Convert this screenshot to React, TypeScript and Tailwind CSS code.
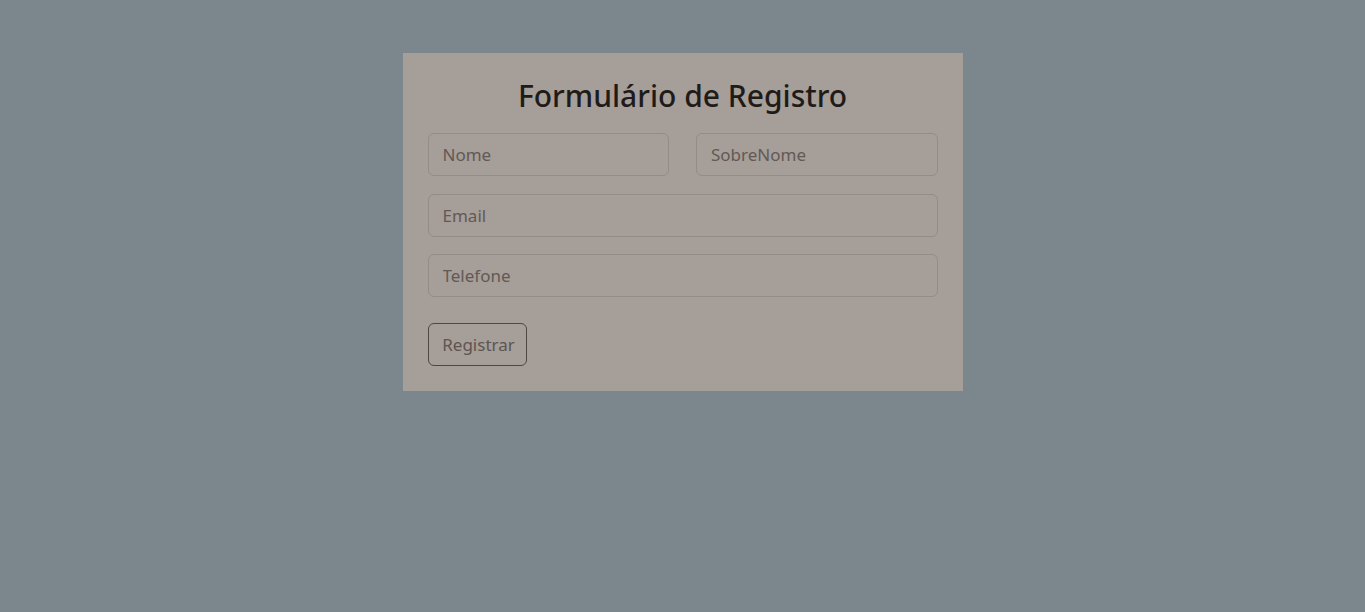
import React from 'react';

const fieldClass =
  'h-[43px] w-full rounded-[6px] border border-[#958c86] bg-transparent px-[14px] text-[17px] text-[#3a3330] placeholder:text-[#625955] outline-none';

const App = () => {
  return (
    <div className="min-h-[612px] w-full bg-[#7c878d] pt-[53px] font-['Noto_Sans',sans-serif]">
      <div className="mx-auto flex w-[560px] flex-col bg-[#a69e98] px-[25px] pb-[25px] pt-[21px]">
        <h1 className="mb-[15px] text-center text-[30px] font-medium leading-[44px] text-[#1f1b19]">
          Formulário de Registro
        </h1>

        <form className="flex flex-col" onSubmit={(e) => e.preventDefault()}>
          <div className="mb-[18px] flex gap-[27px]">
            <input className={fieldClass} placeholder="Nome" />
            <input className={fieldClass} placeholder="SobreNome" />
          </div>
          <input className={fieldClass + ' mb-[17px]'} placeholder="Email" />
          <input className={fieldClass + ' mb-[26px]'} placeholder="Telefone" />
          <div>
            <button
              type="submit"
              className="h-[43px] w-[99px] rounded-[6px] border border-[#4e4743] pl-[3px] text-[17px] text-[#5e5551]"
            >
              Registrar
            </button>
          </div>
        </form>
      </div>
    </div>
  );
};

export default App;
